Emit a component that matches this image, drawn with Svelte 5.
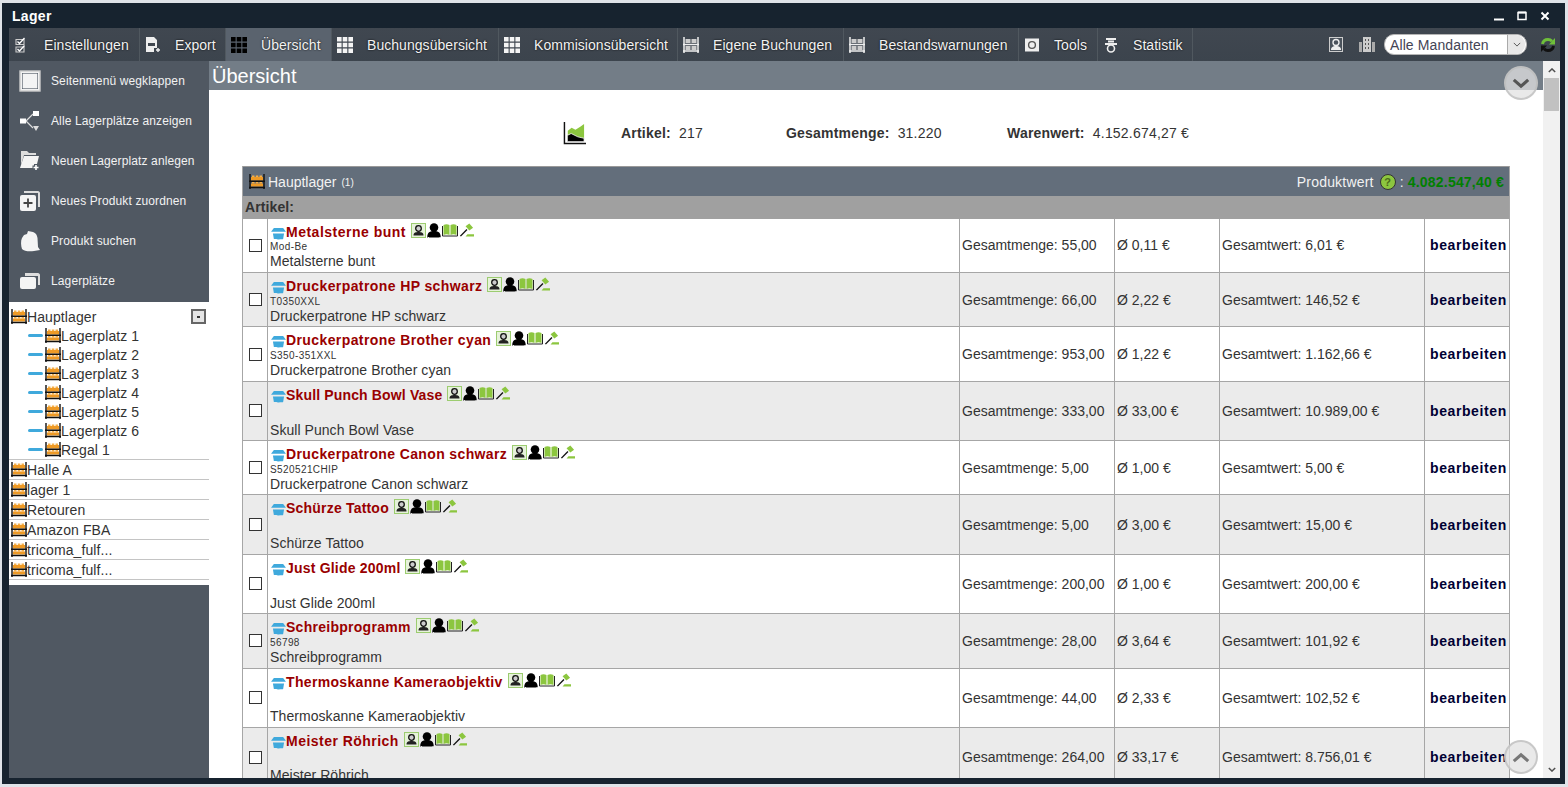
<script>
  const tabs = [
    { label: 'Einstellungen', icon: 'check', w: 131 },
    { label: 'Export', icon: 'export', w: 86 },
    { label: 'Übersicht', icon: 'grid', w: 106, active: true },
    { label: 'Buchungsübersicht', icon: 'grid', w: 167 },
    { label: 'Kommisionsübersicht', icon: 'grid', w: 179 },
    { label: 'Eigene Buchungen', icon: 'rack', w: 166 },
    { label: 'Bestandswarnungen', icon: 'rack', w: 175 },
    { label: 'Tools', icon: 'safe', w: 79 },
    { label: 'Statistik', icon: 'tower', w: 95 }
  ];

  const sideMenu = [
    { label: 'Seitenmenü wegklappen', icon: 'panel' },
    { label: 'Alle Lagerplätze anzeigen', icon: 'nodes' },
    { label: 'Neuen Lagerplatz anlegen', icon: 'folder' },
    { label: 'Neues Produkt zuordnen', icon: 'plus' },
    { label: 'Produkt suchen', icon: 'blob' },
    { label: 'Lagerplätze', icon: 'stack' }
  ];

  const children = ['Lagerplatz 1', 'Lagerplatz 2', 'Lagerplatz 3', 'Lagerplatz 4', 'Lagerplatz 5', 'Lagerplatz 6', 'Regal 1'];
  const roots = ['Halle A', 'lager 1', 'Retouren', 'Amazon FBA', 'tricoma_fulf...', 'tricoma_fulf...'];

  // h = row height, ls = title tracking; lift / boxLift / nameUp nudge text by a pixel
  const rows = [
    { title: 'Metalsterne bunt', sku: 'Mod-Be', qty: '55,00', avg: '0,11', total: '6,01', h: 54, ls: 0.5, lift: true },
    { title: 'Druckerpatrone HP schwarz', sku: 'T0350XXL', qty: '66,00', avg: '2,22', total: '146,52', h: 54, ls: 0.4 },
    { title: 'Druckerpatrone Brother cyan', sku: 'S350-351XXL', qty: '953,00', avg: '1,22', total: '1.162,66', h: 55, ls: 0.4 },
    { title: 'Skull Punch Bowl Vase', qty: '333,00', avg: '33,00', total: '10.989,00', h: 59, ls: 0.15, boxLift: true },
    { title: 'Druckerpatrone Canon schwarz', sku: 'S520521CHIP', qty: '5,00', avg: '1,00', total: '5,00', h: 54, ls: 0.37 },
    { title: 'Schürze Tattoo', qty: '5,00', avg: '3,00', total: '15,00', h: 60, ls: 0.2 },
    { title: 'Just Glide 200ml', qty: '200,00', avg: '1,00', total: '200,00', h: 59, ls: 0.2, boxLift: true },
    { title: 'Schreibprogramm', sku: '56798', qty: '28,00', avg: '3,64', total: '101,92', h: 55, ls: 0.27, boxLift: true },
    { title: 'Thermoskanne Kameraobjektiv', qty: '44,00', avg: '2,33', total: '102,52', h: 59, ls: 0.33, boxLift: true, nameUp: true },
    { title: 'Meister Röhrich', qty: '264,00', avg: '33,17', total: '8.756,01', h: 59, ls: 0.47, nameUp: true }
  ];
</script>

{#snippet shelf()}
  <svg class="shelf" viewBox="0 0 16 15">
    <path d="M3 1.500h2.500v1.500H3zM6.800 1.500h2.500v1.500H6.800zM10.500 1.500H13v1.500h-2.500zM3 8h2.500v1.500H3zM6.800 8h2.500v1.500H6.800zM10.500 8H13v1.500h-2.500z" fill="#f5b04a" />
    <rect x="2" y="3" width="12" height="3.500" fill="#ee9a26" />
    <rect x="2" y="9.500" width="12" height="3" fill="#ee9a26" />
    <path d="M1 0v15M15 0v15" stroke="#111" stroke-width="1.400" />
    <path d="M0 7.200h16M0 13.400h16" stroke="#111" stroke-width="1.500" />
  </svg>
{/snippet}

{#snippet tabIcon(name)}
  <svg class="tab-icon" viewBox="0 0 16 16">
    {#if name === 'check'}
      <path d="M2 2.500h8v5H2zM2 10h8v5H2z" fill="none" stroke="#ccc" stroke-width="1.100" />
      <path d="M3.500 4.500l2 2 5-5.500M3.500 12l2 2 5-5.500" fill="none" stroke="#fff" stroke-width="1.300" />
    {:else if name === 'export'}
      <path d="M1 0h8l3 3v8H9v4H1z" fill="#eee" />
      <path d="M3 6h7v3H3z" fill="#40474f" />
      <path d="M13 11v4M11 13h4" stroke="#eee" stroke-width="1.400" />
    {:else if name === 'grid'}
      <path fill="currentColor" d="M0 0h4.600v4.600H0zM5.700 0h4.600v4.600H5.700zM11.400 0H16v4.600h-4.600zM0 5.700h4.600v4.600H0zM5.700 5.700h4.600v4.600H5.700zM11.400 5.700H16v4.600h-4.600zM0 11.400h4.600V16H0zM5.700 11.400h4.600V16H5.700zM11.400 11.400H16V16h-4.600z" />
    {:else if name === 'rack'}
      <path d="M1 0v16M15 0v16M0 7.500h16M0 14h16" stroke="#eee" stroke-width="1.500" />
      <path d="M2.500 2h5v4h-5zM8.500 2h5v4h-5zM2.500 9h5v4h-5zM8.500 9h5v4h-5z" fill="#ccc" />
    {:else if name === 'safe'}
      <rect x="1" y="1.500" width="14" height="13" fill="#eee" />
      <circle cx="8" cy="8" r="3.400" fill="none" stroke="#555" stroke-width="1.400" />
    {:else}
      <path d="M3 1h10v2H3zM5 3.500h6v2H5zM2 6h12v2H2z" fill="#eee" />
      <circle cx="8" cy="11.500" r="3.500" fill="none" stroke="#eee" stroke-width="1.600" />
    {/if}
  </svg>
{/snippet}

{#snippet sideIcon(name)}
  <svg class="side-icon" viewBox="0 0 22 22">
    {#if name === 'panel'}
      <rect x="1" y="1" width="20" height="20" fill="#f2f2f2" stroke="#ccc" stroke-width="1.400" />
      <rect x="3" y="3" width="16" height="16" fill="#4f5863" />
      <rect x="3.600" y="3.600" width="14.800" height="14.800" fill="#f4f4f4" />
    {:else if name === 'nodes'}
      <path d="M7 11l7-7M7 11l7 7" stroke="#ddd" stroke-width="1.200" />
      <path d="M1 8.500h6v5H1zM14 1h6v5h-6z" fill="#fff" />
      <path d="M14 16h6l-3 5z" fill="#ddd" />
    {:else if name === 'folder'}
      <path d="M2 1h6l2 2h7v2H5L2 15z" fill="#ddd" />
      <path d="M5 6h15l-3 12H1z" fill="#f4f4f4" />
      <path d="M17 14v7M13.500 17.500h7" stroke="#4f5863" stroke-width="4" />
      <path d="M17 15v5M14.500 17.500h5" stroke="#fff" stroke-width="1.600" />
    {:else if name === 'plus'}
      <path d="M5 1h14c1 0 2 1 2 2v14h-2V3H5z" fill="#ddd" />
      <rect x="1" y="5" width="16" height="16" rx="2" fill="#f4f4f4" />
      <path d="M9 8.500v9M4.500 13h9" stroke="#444" stroke-width="1.800" />
    {:else if name === 'blob'}
      <path d="M5 5l3-1 1-3 5 1c3 1 4 3 4.500 6l.5 9 2 3-3 .5-3 .5c-4 .5-10 .5-12-2-1-3-1.500-8 0-11z" fill="#f4f4f4" />
    {:else}
      <path d="M6 3h13c1 0 2 1 2 2v10h-2V6H6z" fill="#ddd" />
      <rect x="1" y="7" width="16" height="12" rx="2" fill="#f4f4f4" />
    {/if}
  </svg>
{/snippet}

{#snippet badges()}
  <span class="badges">
    <svg viewBox="0 0 15 15" width="15" height="15">
      <rect x=".5" y=".5" width="14" height="14" fill="#e6f2da" stroke="#9ccc70" />
      <circle cx="7.500" cy="5.500" r="2.800" fill="#ccc" stroke="#111" stroke-width="1.300" />
      <path d="M2.500 12.500c0-3 2-3.500 5-3.500s5 .5 5 3.500z" fill="#222" />
    </svg>
    <svg viewBox="0 0 14 15" width="14" height="15">
      <circle cx="7" cy="4.500" r="4.300" fill="#000" />
      <path d="M.3 14c0-4.500 2.700-6 6.700-6s6.700 1.500 6.700 6c0 .8-13.400 .8-13.400 0z" fill="#000" />
    </svg>
    <svg viewBox="0 0 16 14" width="16" height="14">
      <path d="M1.500 2c2-1 4-1 6 0v10c-2-1-4-1-6 0zM8.500 2c2-1 4-1 6 0v10c-2-1-4-1-6 0z" fill="#8cc63f" />
      <path d="M.5 3v10h15V3" fill="none" stroke="#222" stroke-width="1" />
    </svg>
    <svg viewBox="0 0 16 15" width="15" height="15">
      <path d="M7 3l4-3 4 4.500-4 3z" fill="#8cc63f" />
      <path d="M8.500 6.500l-7 7" stroke="#111" stroke-width="1.500" />
      <path d="M7 14h9v-2.500H9z" fill="#8cc63f" />
    </svg>
  </span>
{/snippet}

<div class="window">
  <header class="titlebar">
    <span class="app-title">Lager</span>
    <div class="win-controls">
      <svg viewBox="0 0 10 10" width="10" height="10"><path d="M0 8.500h10" stroke="#fff" stroke-width="2" /></svg>
      <svg viewBox="0 0 10 10" width="10" height="10"><path d="M1 1.500h8v7H1z" fill="none" stroke="#fff" stroke-width="1.500" /><path d="M1 1.500h8" stroke="#fff" stroke-width="2" /></svg>
      <svg viewBox="0 0 10 10" width="10" height="10"><path d="M1.500 1.500l7 7M8.500 1.500l-7 7" stroke="#fff" stroke-width="2" /></svg>
    </div>
  </header>

  <div class="frame">
    <nav class="toolbar">
      {#each tabs as tab}
        <div class="tab" class:active={tab.active} style:width="{tab.w}px">
          {@render tabIcon(tab.icon)}
          <span>{tab.label}</span>
        </div>
      {/each}
      <div class="tool-right">
        <svg viewBox="0 0 14 15" width="14" height="15">
          <rect x=".5" y=".5" width="13" height="14" fill="#4a525b" stroke="#ccc" />
          <circle cx="7" cy="5.500" r="3" fill="none" stroke="#eee" stroke-width="1.400" />
          <path d="M2 13c0-3 2-4 5-4s5 1 5 4z" fill="#eee" />
        </svg>
        <svg class="building" viewBox="0 0 16 15" width="16" height="15">
          <path d="M4 0h8v15H4z" fill="#ccc" />
          <path d="M0 5h3v10H0zM13 5h3v10h-3z" fill="#aaa" />
          <path d="M6 2h1v2H6zM9 2h1v2H9zM6 6h1v2H6zM9 6h1v2H9zM6 10h1v2H6zM9 10h1v2H9z" fill="#555" />
        </svg>
        <div class="client-select">
          <span>Alle Mandanten</span>
          <span class="select-btn">
            <svg viewBox="0 0 10 6" width="8" height="5"><path d="M1 1l4 4 4-4" fill="none" stroke="#555" stroke-width="1.200" /></svg>
          </span>
        </div>
        <svg class="refresh" viewBox="0 0 16 16" width="16" height="16">
          <path d="M2.500 7C3 4.200 5.200 2.500 8 2.500c1.600 0 3 .7 4 1.800" fill="none" stroke="#6fbf3a" stroke-width="3" />
          <path d="M15 1v6.500H9z" fill="#6fbf3a" />
          <path d="M13.500 9C13 11.800 10.800 13.500 8 13.500c-1.600 0-3-.7-4-1.800" fill="none" stroke="#111" stroke-width="3" />
          <path d="M1 15V8.500h6z" fill="#111" />
        </svg>
      </div>
    </nav>

    <div class="workspace">
      <aside class="sidebar">
        <ul class="side-menu">
          {#each sideMenu as item}
            <li>
              {@render sideIcon(item.icon)}
              <span>{item.label}</span>
            </li>
          {/each}
        </ul>
        <div class="tree">
          <div class="tree-group">
            <div class="tree-head">
              {@render shelf()}
              <span>Hauptlager</span>
              <span class="collapse"><i></i></span>
            </div>
            {#each children as child}
              <div class="tree-child">
                <span class="dash"></span>
                {@render shelf()}
                <span>{child}</span>
              </div>
            {/each}
          </div>
          {#each roots as root}
            <div class="tree-root">
              {@render shelf()}
              <span>{root}</span>
            </div>
          {/each}
        </div>
      </aside>

      <main class="main">
        <h1 class="page-title">Übersicht</h1>

        <div class="stats">
          <svg viewBox="0 0 24 24" width="23" height="23">
            <path d="M1.500 0v22.500H24" fill="none" stroke="#111" stroke-width="1.500" />
            <path d="M5 9l4-3 4 2 5-3 4-3v16H5z" fill="#8cc63f" />
            <path d="M4.500 14l4-2 3 1.500 4 2 6.500 1.500v3.500H4.500z" fill="#000" stroke="#fff" stroke-width=".8" />
          </svg>
          <div class="stat"><b>Artikel:</b> 217</div>
          <div class="stat"><b>Gesamtmenge:</b> 31.220</div>
          <div class="stat"><b>Warenwert:</b> 4.152.674,27 €</div>
        </div>

        <section class="store">
          <div class="store-head">
            {@render shelf()}
            <span class="store-name">Hauptlager</span>
            <small>(1)</small>
            <span class="store-value">
              <span>Produktwert</span>
              <span class="help">?</span>
              <span>:</span>
              <b>4.082.547,40 €</b>
            </span>
          </div>
          <div class="store-sub">Artikel:</div>
          {#each rows as row, i}
            <div class="row" class:alt={i % 2 === 1} class:lift={row.lift} class:box-lift={row.boxLift} class:name-up={row.nameUp} style:height="{row.h}px">
              <div class="cell check"><input type="checkbox" /></div>
              <div class="cell product">
                <div class="product-title" style:letter-spacing="{row.ls}px">
                  <svg viewBox="0 0 16 14" width="15" height="13">
                    <path d="M3 1h10l3 4H0z" fill="#3fa9dc" />
                    <path d="M2 7h12l-1 6c0 .5-10 .5-10 0z" fill="#3fa9dc" />
                  </svg>
                  <span>{row.title}</span>
                  {@render badges()}
                </div>
                {#if row.sku}
                  <div class="sku">{row.sku}</div>
                {:else}
                  <div class="sku empty"></div>
                {/if}
                <div class="name">{row.title}</div>
              </div>
              <div class="cell">Gesamtmenge: {row.qty}</div>
              <div class="cell">Ø {row.avg} €</div>
              <div class="cell">Gesamtwert: {row.total} €</div>
              <div class="cell edit">bearbeiten</div>
            </div>
          {/each}
        </section>

        <button class="jump down" aria-label="Nach unten">
          <svg viewBox="0 0 20 12" width="18" height="11"><path d="M2 2l8 7 8-7" fill="none" stroke="#555" stroke-width="3.500" /></svg>
        </button>
        <button class="jump up" aria-label="Nach oben">
          <svg viewBox="0 0 20 12" width="18" height="11"><path d="M2 10l8-7 8 7" fill="none" stroke="#777" stroke-width="3.500" /></svg>
        </button>
      </main>

      <div class="scrollbar">
        <svg viewBox="0 0 10 6" width="8" height="5"><path d="M1 5l4-4 4 4" fill="none" stroke="#505050" stroke-width="1.800" /></svg>
        <div class="thumb"></div>
        <svg class="arrow-down" viewBox="0 0 10 6" width="8" height="5"><path d="M1 1l4 4 4-4" fill="none" stroke="#505050" stroke-width="1.800" /></svg>
      </div>
    </div>
  </div>
</div>

<style>
  :global(body) {
    background: #dfe3e8;
    font-family: "Liberation Sans", Arial, sans-serif;
    font-size: 14px;
    color: #333;
    overflow: hidden;
  }

  .window {
    display: flex;
    flex-direction: column;
    height: 781px;
    margin: 3px 3px 3px 2px;
    background: #17232f;
  }

  .titlebar {
    display: flex;
    flex: none;
    align-items: center;
    justify-content: space-between;
    height: 25px;
    padding: 0 15px 0 10px;
  }

  .app-title {
    color: #fff;
    font-weight: bold;
    font-size: 14px;
    letter-spacing: 0.3px;
  }

  .win-controls {
    display: flex;
    gap: 13px;
  }

  .frame {
    display: flex;
    flex: 1;
    flex-direction: column;
    min-height: 0;
    padding: 0 5px 6px 7px;
  }

  .toolbar {
    display: flex;
    flex: none;
    height: 33px;
    background: linear-gradient(#404750, #3c444d);
  }

  .tab {
    display: flex;
    flex: none;
    align-items: center;
    box-sizing: border-box;
    gap: 14px;
    padding-left: 5px;
    border-right: 1px solid #50585f;
    color: #f2f2f2;
    text-shadow: 0 0 2px #000;
    white-space: nowrap;
    letter-spacing: 0.05px;
  }

  .tab.active {
    background: #5a636e;
    color: #f2f2f2;
  }

  .tab.active .tab-icon {
    color: #000;
  }

  .tab-icon {
    flex: none;
    width: 16px;
    height: 16px;
    color: #f4f4f4;
  }

  .tool-right {
    display: flex;
    flex: 1;
    align-items: center;
    justify-content: flex-end;
    padding-right: 4px;
  }

  .building {
    margin-left: 16px;
  }

  .client-select {
    display: flex;
    align-items: center;
    justify-content: space-between;
    box-sizing: border-box;
    width: 143px;
    height: 21px;
    margin-left: 9px;
    padding: 0 1px 0 5px;
    border: 1px solid #b5b5b5;
    border-radius: 10px;
    background: #fff;
    color: #445;
    letter-spacing: 0.1px;
  }

  .select-btn {
    display: flex;
    align-items: center;
    justify-content: center;
    width: 17px;
    height: 19px;
    border-left: 1px solid #aaa;
    border-radius: 0 9px 9px 0;
    background: #e8e8e8;
  }

  .refresh {
    margin-left: 13px;
  }

  .workspace {
    display: flex;
    flex: 1;
    min-height: 0;
  }

  .sidebar {
    flex: none;
    width: 200px;
    background: #505862;
  }

  .side-menu {
    margin: 0;
    padding: 0 0 1px;
    list-style: none;
  }

  .side-menu li {
    display: flex;
    align-items: center;
    gap: 10px;
    height: 40px;
    padding-left: 10px;
    color: #f2f2f2;
    font-size: 12px;
    letter-spacing: 0.12px;
  }

  .side-icon {
    flex: none;
    width: 22px;
    height: 22px;
  }

  .tree {
    padding: 5px 0 5px;
    background: #fff;
    letter-spacing: 0.1px;
  }

  .shelf {
    flex: none;
    width: 16px;
    height: 15px;
  }

  .tree-group {
    border-bottom: 1px solid #c4c4c4;
  }

  .tree-head,
  .tree-child,
  .tree-root {
    display: flex;
    align-items: center;
    white-space: nowrap;
  }

  .tree-head {
    height: 19px;
    padding-left: 2px;
  }

  .tree-child {
    height: 19px;
    padding-left: 19px;
  }

  .tree-root {
    box-sizing: border-box;
    height: 20px;
    padding-left: 2px;
    border-bottom: 1px solid #c4c4c4;
  }

  .dash {
    flex: none;
    width: 15px;
    height: 3px;
    margin-right: 2px;
    border-radius: 2px;
    background: #3fa9dc;
  }

  .collapse {
    display: flex;
    align-items: center;
    justify-content: center;
    box-sizing: border-box;
    width: 15px;
    height: 15px;
    margin-left: auto;
    margin-right: 3px;
    border: 2px solid #666;
    background: #e4e4e4;
  }

  .collapse i {
    width: 3px;
    height: 2px;
    background: #333;
  }

  .main {
    position: relative;
    flex: 1;
    min-width: 0;
    overflow: hidden;
    background: #fff;
  }

  .page-title {
    height: 29px;
    margin: 0;
    padding-left: 3px;
    background: #737d87;
    color: #fff;
    font-size: 20px;
    font-weight: normal;
    line-height: 31px;
  }

  .stats {
    display: grid;
    grid-template-columns: 58px 165px 221px auto;
    align-items: center;
    height: 76px;
    padding: 10px 0 0 354px;
    box-sizing: border-box;
    letter-spacing: 0.2px;
  }

  .stat b {
    margin-right: 4px;
  }

  .store {
    margin: 0 33px;
    border-left: 1px solid #a6a6a6;
    border-right: 1px solid #a6a6a6;
  }

  .store-head {
    display: flex;
    align-items: center;
    box-sizing: border-box;
    height: 30px;
    padding: 0 5px 0 6px;
    border-top: 1px solid #999;
    background: #636e7b;
    color: #f2f2f2;
  }

  .store-name {
    margin-left: 3px;
  }

  .store-head small {
    margin: 1px 0 0 5px;
    font-size: 10px;
  }

  .store-value {
    display: flex;
    align-items: center;
    gap: 4px;
    margin-left: auto;
    white-space: pre;
    letter-spacing: 0.2px;
  }

  .store-value b {
    color: #008000;
  }

  .help {
    display: inline-flex;
    align-items: center;
    justify-content: center;
    box-sizing: border-box;
    width: 16px;
    height: 16px;
    margin: 0 0 0 2px;
    border: 1px solid #333;
    border-radius: 50%;
    background: #8cc63f;
    color: #4a6a1a;
    font-size: 11px;
    font-weight: bold;
  }

  .store-sub {
    height: 23px;
    padding-left: 2px;
    background: #a0a0a0;
    font-weight: bold;
    line-height: 23px;
    letter-spacing: 0.1px;
  }

  .row {
    display: grid;
    grid-template-columns: 25px 692px 155px 105px 205px 1fr;
    box-sizing: border-box;
    border-bottom: 1px solid #a6a6a6;
    background: #fff;
  }

  .row.alt {
    background: #ebebeb;
  }

  .cell {
    display: flex;
    align-items: center;
    min-width: 0;
    padding-left: 2px;
    border-right: 1px solid #a6a6a6;
    white-space: nowrap;
  }

  .cell:last-child {
    border-right: 0;
  }

  .row.lift .cell {
    padding-bottom: 2px;
  }

  .check,
  .row.lift .check {
    justify-content: center;
    padding: 0;
  }

  .row.box-lift .check {
    padding-bottom: 2px;
  }

  .check input {
    appearance: none;
    width: 13px;
    height: 13px;
    margin: 0;
    border: 1px solid #333;
    background: #fff;
  }

  .row .product,
  .row.lift .product {
    display: block;
    padding: 3px 0 0 2px;
  }

  .product-title {
    display: flex;
    align-items: center;
    height: 20px;
    color: #990000;
    font-weight: bold;
  }

  .product-title svg {
    flex: none;
  }

  .product-title > svg {
    margin: 2px 0 0 1px;
  }

  .badges {
    display: flex;
    align-items: center;
    gap: 1px;
    margin: -4px 0 0 5px;
  }

  .sku {
    height: 14px;
    margin-top: -1px;
    font-size: 10px;
    line-height: 14px;
    letter-spacing: 0.4px;
  }

  .row.lift .sku {
    margin-top: -2px;
  }

  .sku.empty {
    height: 20px;
    margin-top: -2px;
  }

  .row.name-up .sku.empty {
    height: 19px;
  }

  .name {
    margin-top: -1px;
    line-height: 16px;
    letter-spacing: 0.05px;
  }

  .cell.edit {
    padding-left: 5px;
    color: #000033;
    font-weight: bold;
    letter-spacing: 0.6px;
  }

  .jump {
    position: absolute;
    right: 5px;
    display: flex;
    align-items: center;
    justify-content: center;
    box-sizing: border-box;
    width: 34px;
    height: 34px;
    padding: 0;
    border: 2px solid rgba(190, 190, 190, 0.75);
    border-radius: 50%;
    background: rgba(225, 225, 225, 0.75);
  }

  .jump.down {
    top: 5px;
  }

  .jump.up {
    bottom: 4px;
  }

  .scrollbar {
    display: flex;
    flex: none;
    flex-direction: column;
    align-items: center;
    width: 17px;
    padding-top: 7px;
    box-sizing: border-box;
    background: #f1f1f1;
  }

  .thumb {
    width: 15px;
    height: 33px;
    margin-top: 5px;
    background: #c1c1c1;
  }

  .arrow-down {
    margin-top: auto;
    margin-bottom: 6px;
  }
</style>
